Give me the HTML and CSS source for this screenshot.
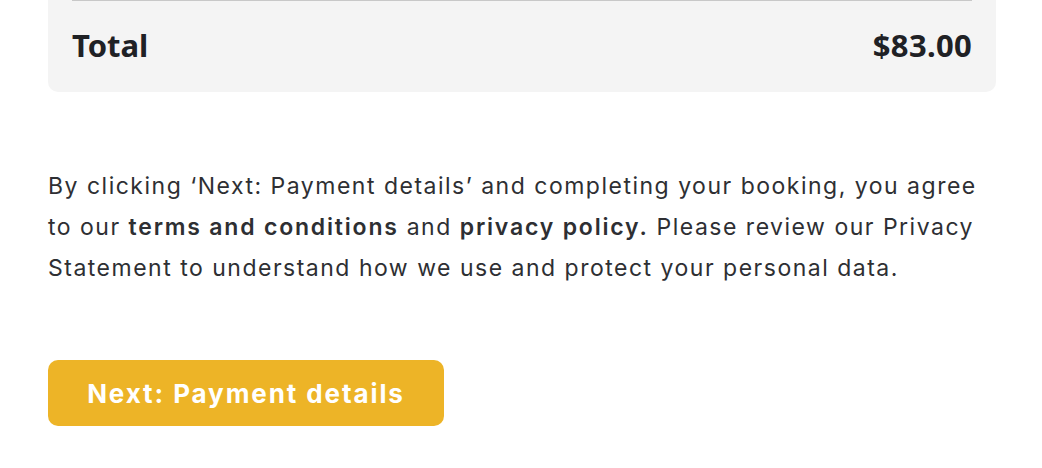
FILE: index.html
```html
<!DOCTYPE html>
<html>
<head>
<meta charset="utf-8">
<link rel="stylesheet" href="styles.css">
</head>
<body>
<div class="page">
  <div class="summary">
    <div class="total-row">
      <span class="label">Total</span>
      <span class="amount">$83.00</span>
    </div>
  </div>
  <p class="terms">By clicking ‘Next: Payment details’ and completing your booking, you agree to our <strong>terms and conditions</strong> and <strong>privacy policy.</strong> Please review our Privacy Statement to understand how we use and protect your personal data.</p>
  <button class="next">Next: Payment details</button>
</div>
</body>
</html>
```
FILE: styles.css
```css
html, body { margin: 0; padding: 0; background: #fff; }
.page { padding: 0 46px 0 48px; display: flex; flex-direction: column; align-items: flex-start; }
.summary {
  align-self: stretch;
  background: #f4f4f4;
  border-radius: 0 0 10px 10px;
  padding: 0 24px;
}
.total-row {
  border-top: 1px solid #c8c8c8;
  display: flex;
  justify-content: space-between;
  align-items: center;
  height: 87px;
  padding-bottom: 4px;
  font-family: "Noto Sans", sans-serif;
  font-weight: 700;
  font-size: 31px;
  color: #1f2125;
}
.amount { letter-spacing: 0.3px; }
.terms {
  margin: 74px 0 0 0;
  font-family: Inter, sans-serif;
  font-size: 23px;
  line-height: 41px;
  letter-spacing: 1.5px;
  color: #2e2f33;
  max-width: 940px;
}
.terms strong { font-weight: 600; letter-spacing: 1.8px; }
.next {
  margin-top: 71px;
  width: 396px;
  height: 66px;
  border: 0;
  border-radius: 10px;
  background: #edb427;
  color: #fff;
  font-family: Inter, sans-serif;
  font-weight: 700;
  font-size: 26px;
  letter-spacing: 1.9px;
  padding: 0;
}
```
